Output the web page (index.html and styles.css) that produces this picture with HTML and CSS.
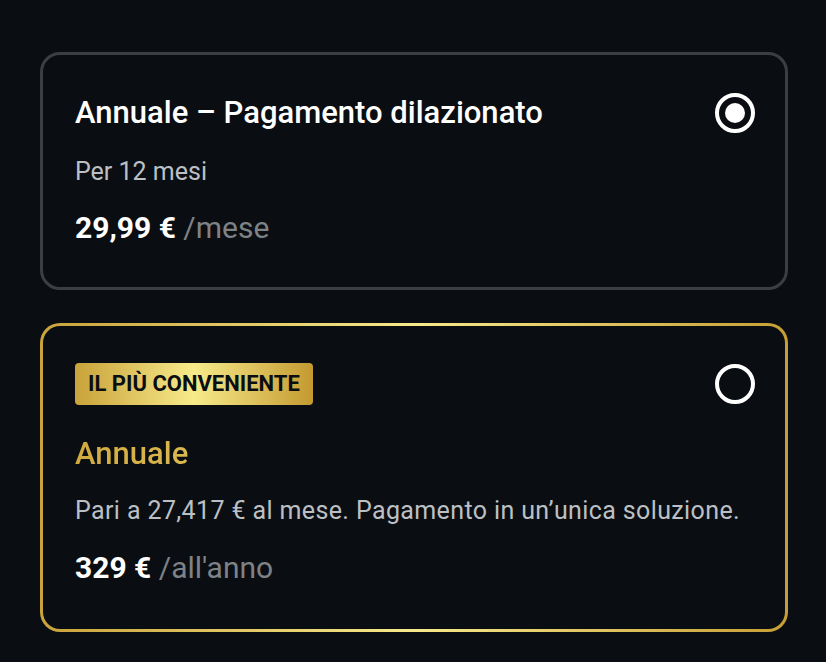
FILE: index.html
```html
<!DOCTYPE html>
<html lang="it">

<head>
    <meta charset="UTF-8">
    <meta name="viewport" content="width=device-width, initial-scale=1.0">
    <title>Piani</title>
    <link rel="stylesheet" href="styles.css">
</head>

<body>
    <div class="plans">
        <div class="plan">
            <div class="plan-head">
                <h2 class="plan-title">Annuale – Pagamento dilazionato</h2>
                <span class="radio checked"></span>
            </div>
            <p class="plan-desc">Per 12 mesi</p>
            <p class="plan-price"><strong>29,99 €</strong> <span>/mese</span></p>
        </div>

        <div class="plan best">
            <div class="plan-head">
                <span class="badge">IL PIÙ CONVENIENTE</span>
                <span class="radio"></span>
            </div>
            <h2 class="plan-title gold">Annuale</h2>
            <p class="plan-desc">Pari a 27,417 € al mese. Pagamento in un’unica soluzione.</p>
            <p class="plan-price"><strong>329 €</strong> <span>/all'anno</span></p>
        </div>
    </div>
</body>

</html>
```

FILE: styles.css
```css
body {
    margin: 0;
    background-color: #0a0e12;
    font-family: Roboto, "Liberation Sans", sans-serif;
    color: #fff;
}
.plans {
    display: flex;
    flex-direction: column;
    gap: 33px;
    padding: 52px 38px 0 40px;
}
.plan {
    border: 3px solid #3b3f44;
    border-radius: 20px;
    padding: 38px 30px 41px 32px;
}
.plan-head {
    display: flex;
    justify-content: space-between;
    align-items: center;
}
.plan-title {
    margin: 0;
    font-size: 31px;
    font-weight: 500;
    line-height: 40px;
}
.plan-desc {
    margin: 23px 0 0;
    font-size: 25px;
    color: #bcc0c5;
    line-height: 32px;
}
.plan-price {
    margin: 22px 0 0;
    font-size: 30px;
    line-height: 36px;
}
.plan-price strong {
    font-weight: 700;
}
.plan-price span {
    color: #7e8287;
}
.radio {
    width: 40px;
    height: 40px;
    border: 4px solid #fff;
    border-radius: 50%;
    box-sizing: border-box;
    position: relative;
}
.radio.checked::after {
    content: "";
    position: absolute;
    left: 6px;
    top: 6px;
    width: 20px;
    height: 20px;
    border-radius: 50%;
    background-color: #fff;
}
.best {
    border: 3px solid transparent;
    padding-top: 37px;
    padding-bottom: 43px;
    background: linear-gradient(#0a0e12, #0a0e12) padding-box,
        linear-gradient(90deg, #c9a23a, #f7e98a 50%, #c79e35) border-box;
}
.best .plan-desc {
    margin-top: 21px;
    letter-spacing: 0.38px;
}
.best .plan-price {
    margin-top: 23px;
}
.badge {
    background: linear-gradient(90deg, #c9a23a, #f7ea8a 50%, #c49a31);
    color: #0a0e12;
    font-size: 22px;
    font-weight: 700;
    line-height: 26px;
    padding: 8px 13px;
    border-radius: 4px;
}
.gold {
    margin-top: 29px;
    background: linear-gradient(90deg, #d1aa3f, #f0dc7a 60%, #d3ae43);
    -webkit-background-clip: text;
    background-clip: text;
    color: transparent;
}
```
